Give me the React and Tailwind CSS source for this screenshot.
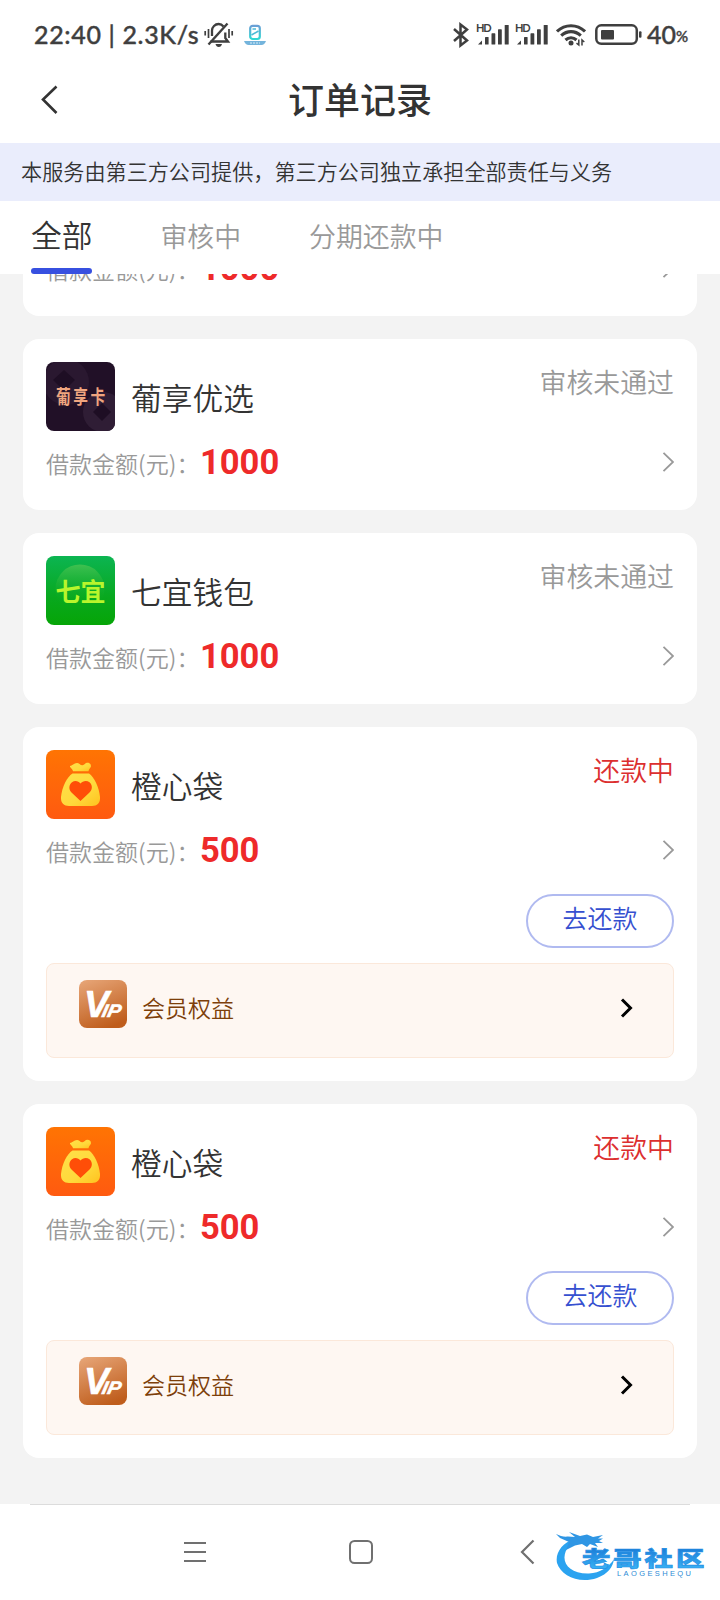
const CJK = "font-['Noto_Sans_CJK_SC',sans-serif]";

const ORDERS = [
  { id: 1, name: '葡享优选', logo: 'grape', amount: 1000, status: 'rejected' },
  { id: 2, name: '葡享优选', logo: 'grape', amount: 1000, status: 'rejected' },
  { id: 3, name: '七宜钱包', logo: 'qiyi', amount: 1000, status: 'rejected' },
  { id: 4, name: '橙心袋', logo: 'bag', amount: 500, status: 'repaying' },
  { id: 5, name: '橙心袋', logo: 'bag', amount: 500, status: 'repaying' },
];

function BellOff() {
  return (
    <svg width="30" height="26" viewBox="0 0 30 26" fill="none" stroke="#3f3f3f" strokeWidth="2.3">
      <path d="M6.5 19.5H24L21.3 16V10.5M19.5 4.5C18 2.6 16.3 2 14.6 2C11 2 8 5 8 8.600V14" />
      <path d="M4.500 22.500L23.500 1.500" strokeWidth="2.400" />
      <path d="M11.500 22H18C17.500 24 16.500 25 14.800 25C13 25 12 24 11.500 22Z" fill="#3f3f3f" stroke="none" />
      <path d="M1.200 9V13.500M4.500 7V16M28.200 9V13.500M25 7V16" strokeWidth="1.700" />
    </svg>
  );
}

function AppBadge() {
  return (
    <svg width="22" height="22" viewBox="0 0 22 22" fill="none">
      <defs>
        <linearGradient id="badge" x1="0" y1="0" x2="0" y2="1">
          <stop offset="0" stopColor="#6a9fd6" />
          <stop offset="1" stopColor="#2fd8d2" />
        </linearGradient>
      </defs>
      <rect x="6.200" y="1.800" width="9.600" height="13.200" rx="2.500" stroke="url(#badge)" strokeWidth="2.200" />
      <path d="M8.500 5H12M7.500 11L14.500 7" stroke="#4dbbd6" strokeWidth="1.500" />
      <path d="M0 17H22C21 19.500 19.500 21 17.500 21H4.500C2.500 21 1 19.500 0 17Z" fill="#74b4dc" />
      <path d="M6 19H16" stroke="#d5ecf6" strokeWidth="1.200" strokeDasharray="2 1" />
    </svg>
  );
}

function Bluetooth() {
  return (
    <svg width="16" height="26" viewBox="0 0 16 26" fill="none" stroke="#3f3f3f" strokeWidth="2.500">
      <path d="M1 7L14 18.500L7.500 23.500V2.500L14 7.500L1 19" />
    </svg>
  );
}

function Signal() {
  return (
    <svg width="33" height="32" viewBox="0 -4 33 32" fill="#3f3f3f">
      <text x="0" y="8.800" fontSize="11" fontWeight="700" textLength="15.500" className="font-['Lato',sans-serif]">HD</text>
      <path d="M2 21.500L6 17.500V21.500Z" />
      <rect x="9" y="14" width="3.600" height="7.500" rx=".6" />
      <rect x="15.500" y="10.300" width="3.800" height="11.200" rx=".6" />
      <rect x="22" y="6.300" width="3.800" height="15.200" rx=".6" />
      <rect x="28.700" y="2" width="4" height="19.500" rx=".6" />
    </svg>
  );
}

function Wifi() {
  return (
    <svg width="30" height="24" viewBox="0 0 30 24" fill="none" stroke="#3f3f3f" strokeWidth="3.100">
      <path d="M1 8.500C9 .8 21 .8 29 8.500" />
      <path d="M5.200 12.700C11 7.300 19 7.300 24.800 12.700" />
      <path d="M9.500 17C12.700 14 17.300 14 20.500 17" />
      <circle cx="15" cy="20" r="2.500" fill="#3f3f3f" stroke="none" />
      <path d="M22.800 16.500V22L20.500 20.200M26 22.500V17L28.300 19" strokeWidth="1.500" />
    </svg>
  );
}

function Battery() {
  return (
    <svg width="48" height="22" viewBox="0 0 48 22" fill="none">
      <rect x="1.300" y="1.300" width="40.500" height="18.500" rx="5" stroke="#3f3f3f" strokeWidth="2.500" />
      <rect x="6" y="6" width="13" height="9.500" rx="1" fill="#3f3f3f" />
      <rect x="44" y="7.300" width="2.500" height="6.500" rx="1" fill="#3f3f3f" />
    </svg>
  );
}

function StatusBar() {
  return (
    <div className="flex h-[57px] items-end justify-between bg-white pr-[32px] pl-[34px] pb-[9px] font-['Lato',sans-serif] text-[25px] font-medium text-[#3f3f3f] [-webkit-text-stroke:0.4px_#3f3f3f]">
      <div className="flex h-[27px] items-center">
        <span className="w-[170px] whitespace-pre leading-[27px] tracking-[0.650px]">22:40 | 2.3K/s</span>
        <BellOff />
        <span className="ml-[10px]"><AppBadge /></span>
      </div>
      <div className="flex h-[27px] items-center">
        <Bluetooth />
        <span className="ml-[7px]"><Signal /></span>
        <span className="ml-[6px]"><Signal /></span>
        <span className="ml-[8px]"><Wifi /></span>
        <span className="ml-[9px]"><Battery /></span>
        <span className="ml-[4px] leading-[27px]">40</span>
        <span className="pt-[4px] text-[15px] leading-[27px]">%</span>
      </div>
    </div>
  );
}

function GrapeLogo() {
  return (
    <svg className="size-[69px] rounded-lg" viewBox="0 0 69 69">
      <rect width="69" height="69" fill="#211027" />
      <circle cx="20" cy="20" r="23" fill="#2a1830" />
      <circle cx="57" cy="50" r="20" fill="#2f1d35" />
      <path d="M18 8L29 18L18 29L7 18Z" fill="#1e0e24" />
      <path d="M56 41L65 50L56 59L47 50Z" fill="#1e0e24" />
      <g transform="translate(10 41.500) scale(.92 1.180)">
        <text fontSize="16" fontWeight="700" letterSpacing="2.800" fill="#efa57f" className={CJK}>葡享卡</text>
      </g>
    </svg>
  );
}

function QiyiLogo() {
  return (
    <svg className="size-[69px] rounded-lg" viewBox="0 0 69 69">
      <defs>
        <linearGradient id="green" x1="0" y1="0" x2="0" y2="1">
          <stop offset="0" stopColor="#0cb552" />
          <stop offset="0.6" stopColor="#08a81e" />
          <stop offset="1" stopColor="#06a507" />
        </linearGradient>
        <linearGradient id="moon" x1="0" y1="0" x2="0" y2="1">
          <stop offset="0" stopColor="#3fc050" />
          <stop offset="0.8" stopColor="#08a81e" stopOpacity="0" />
        </linearGradient>
      </defs>
      <rect width="69" height="69" fill="url(#green)" />
      <circle cx="34" cy="33" r="24.500" fill="url(#moon)" />
      <text x="9.500" y="45" fontSize="25" fontWeight="700" fill="#b8f52c" className={CJK}>七宜</text>
    </svg>
  );
}

function BagLogo() {
  return (
    <svg className="size-[69px] rounded-lg" viewBox="0 0 69 69">
      <defs>
        <linearGradient id="orange" x1="0" y1="0" x2="0" y2="1">
          <stop offset="0" stopColor="#ff7403" />
          <stop offset="1" stopColor="#ff5a10" />
        </linearGradient>
        <linearGradient id="gold" x1="0" y1="0" x2="1" y2="1">
          <stop offset="0" stopColor="#ffe04a" />
          <stop offset="0.6" stopColor="#ffd93b" />
          <stop offset="1" stopColor="#ffc21f" />
        </linearGradient>
      </defs>
      <rect width="69" height="69" fill="url(#orange)" />
      <path d="M24 16C26 16 28 13 31 13C33 13 34.500 15.500 36.500 15.200C38.500 15 39 12.800 41.500 12.800C43.500 12.800 45.200 14 45 16.500C44.500 18 43 18.500 42.500 21.300H27C26.500 18.500 23.500 17.500 24 16Z" fill="url(#gold)" />
      <path d="M26.500 23.500H43C48 27 53 37 54 47C54.500 53 51 56 46 56H23C18 56 14.500 53 15 47C16 37 21 27 26.500 23.500Z" fill="url(#gold)" />
      <path d="M34.500 51L25.500 42.500C22.500 39.500 22.800 34.500 26 32.200C29 30.200 32.500 31 34.500 33.500C36.500 31 40.500 30.200 43.500 32.200C46.500 34.500 46.800 39.500 43.500 42.500Z" fill="#ff4e08" />
    </svg>
  );
}

function VipIcon() {
  return (
    <svg className="size-[48px] rounded-lg" viewBox="0 0 48 48">
      <defs>
        <linearGradient id="vip" x1="0.2" y1="0" x2="0.6" y2="1">
          <stop offset="0" stopColor="#e5a273" />
          <stop offset="1" stopColor="#bf5d1c" />
        </linearGradient>
      </defs>
      <rect width="48" height="48" fill="url(#vip)" />
      <g fill="#fff" stroke="#fff" strokeWidth=".5" fontStyle="italic" fontWeight="700" className="font-['Liberation_Sans',sans-serif]">
        <text x="5" y="37" fontSize="36" textLength="25" lengthAdjust="spacingAndGlyphs">V</text>
        <g transform="translate(22 37) skewX(-12)">
          <text fontSize="18" textLength="19" lengthAdjust="spacingAndGlyphs">IP</text>
        </g>
      </g>
      <path d="M8 11.300H14V14H9Z" fill="#fff" />
    </svg>
  );
}

const LOGOS = { grape: GrapeLogo, qiyi: QiyiLogo, bag: BagLogo };

function OrderCard({ order }) {
  const Logo = LOGOS[order.logo];
  const repaying = order.status === 'repaying';
  return (
    <div className={`shrink-0 rounded-[16px] bg-white px-[23px] pt-[23px] ${repaying ? 'h-[354px]' : 'h-[171px]'}`}>
      <div className="flex h-[69px] items-start">
        <Logo />
        <p className="ml-[16px] flex-1 pt-[13px] text-[30.720px] leading-[44px] text-[#333]">{order.name}</p>
        <p className={`text-[26.880px] leading-[40px] ${repaying ? 'text-[#dc2f2f]' : 'text-[#999]'}`}>
          {repaying ? '还款中' : '审核未通过'}
        </p>
      </div>
      <div className="mt-[9px] flex h-[44px] items-center">
        <span className="pt-px text-[23.040px] leading-[44px] text-[#999]">借款金额(元)：</span>
        <span className="flex-1 pl-[0.500px] font-['Roboto',sans-serif] text-[34.560px] font-bold leading-[44px] text-[#ee2a2a]">{order.amount}</span>
        <svg width="12" height="20" viewBox="0 0 12 20" fill="none" stroke="#999" strokeWidth="1.800">
          <path d="M1.500 .8L11 10L1.500 19.200" />
        </svg>
      </div>
      {repaying && (
        <>
          <div className="mt-[22px] flex justify-end">
            <button className="h-[54px] w-[148px] rounded-full border-2 border-[#b0baf0] pb-[7px] text-[24.960px] leading-[43px] text-[#3650d0]">
              去还款
            </button>
          </div>
          <div className="mt-[15px] flex h-[95px] rounded-lg border border-[#fbe8da] bg-[#fef7f2] pt-[16px] pr-[40px] pl-[32px]">
            <VipIcon />
            <p className="ml-[15px] flex-1 pt-[10px] text-[23.040px] leading-[34px] text-[#7d3f0a]">会员权益</p>
            <svg className="mt-[18px]" width="13" height="20" viewBox="0 0 13 20" fill="none" stroke="#000" strokeWidth="3">
              <path d="M2 1.500L10.500 10L2 18.500" />
            </svg>
          </div>
        </>
      )}
    </div>
  );
}

function Watermark() {
  return (
    <svg width="152" height="52" viewBox="0 0 152 52">
      <defs>
        <linearGradient id="blue" x1="0" y1="0" x2="0" y2="1">
          <stop offset="0.2" stopColor="#1a7ad6" />
          <stop offset="1" stopColor="#3cb8f8" />
        </linearGradient>
      </defs>
      <path d="M19 9C7 13 0 23 2 33C6 46 24 54 42 48C53 44 58 37 59 29C54 37 45 43 34 43.500C18 44 9 36 9.500 27C10 19 15 14 23 11Z" fill="#2ba3f0" />
      <path d="M1 4C5 6 9 7 13 6.500L20 7L14 2L25 6L32 4.500L38 7L48 5L43 8.500L48 8.500L44 11L48 13L40 13L43 17L35 14L32 17L27 14L20 15.500L11 20L14 12L5 8Z" fill="#2f96e4" />
      <g transform="translate(27 35.500) scale(1.350 1)">
        <text fontSize="21" fontWeight="900" letterSpacing="2.200" fill="url(#blue)" stroke="#2690e4" strokeWidth=".7" className={CJK}>老哥社区</text>
      </g>
      <text x="62" y="45.500" fontSize="7.500" textLength="74" fill="#2d8bd6" className="font-['Liberation_Sans',sans-serif]">LAOGESHEQU</text>
    </svg>
  );
}

function SystemNav() {
  return (
    <div className="relative h-[96px] bg-white px-[30px]">
      <div className="h-px bg-[#dcdcdc]" />
      <div className="flex pt-[34px] pl-[153px]">
        <svg width="25" height="26" viewBox="0 0 25 26" stroke="#707070" strokeWidth="2">
          <path d="M1 4H23M1 13H23M1 22H23" />
        </svg>
        <svg className="ml-[140px]" width="26" height="26" viewBox="0 0 26 26" fill="none" stroke="#707070" strokeWidth="2">
          <rect x="2" y="2" width="22" height="22" rx="4.500" />
        </svg>
        <svg className="ml-[146px]" width="16" height="26" viewBox="0 0 16 26" fill="none" stroke="#707070" strokeWidth="2.200">
          <path d="M13.500 1.500L2 13L13.500 24.500" />
        </svg>
      </div>
      <div className="absolute top-[26px] left-[555px]">
        <Watermark />
      </div>
    </div>
  );
}

export default function App() {
  return (
    <div className="flex h-[1600px] w-[720px] flex-col overflow-hidden bg-[#f3f3f3] font-['Noto_Sans_CJK_SC',sans-serif] font-[350]">
      <StatusBar />
      <header className="flex h-[86px] shrink-0 items-center bg-white px-[40px]">
        <svg width="18" height="30" viewBox="0 0 18 30" fill="none" stroke="#333" strokeWidth="2.600">
          <path d="M16.500 1.500L3 14.500L16.500 28" />
        </svg>
        <h1 className="flex-1 pr-[18px] pb-[5px] text-center text-[36px] font-medium leading-[52px] text-[#333]">订单记录</h1>
      </header>
      <div className="h-[58px] shrink-0 bg-[#eaedfc] pl-[21.120px] text-[21.120px] leading-[57px] text-[#333]">
        本服务由第三方公司提供，第三方公司独立承担全部责任与义务
      </div>
      <nav className="flex h-[73px] shrink-0 gap-[68px] bg-white pl-[31px] text-[26.880px] leading-[70px] text-[#999]">
        <div className="flex flex-col">
          <span className="h-[67px] text-[30.720px] leading-[66px] text-[#333]">全部</span>
          <span className="h-[6px] rounded-full bg-[#3750e0]" />
        </div>
        <span>审核中</span>
        <span>分期还款中</span>
      </nav>
      <main className="flex min-h-0 flex-1 flex-col justify-end gap-[23px] overflow-hidden px-[23px] pb-[46px]">
        {ORDERS.map((o) => (
          <OrderCard key={o.id} order={o} />
        ))}
      </main>
      <SystemNav />
    </div>
  );
}
